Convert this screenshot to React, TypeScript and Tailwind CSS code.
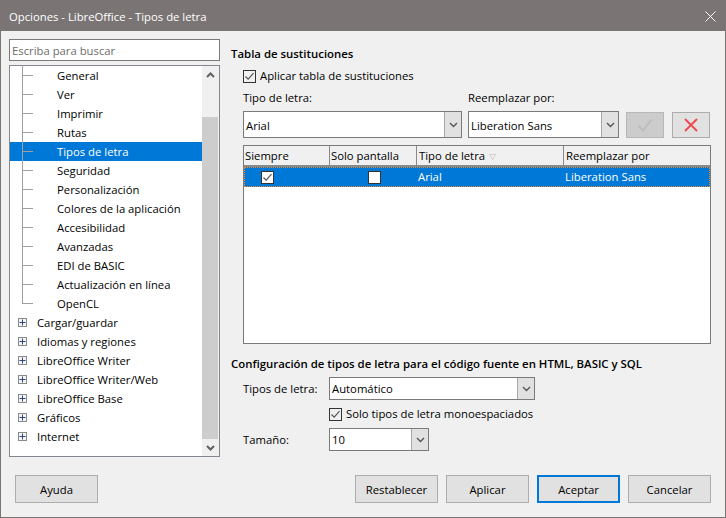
const FONT = "font-['Open_Sans','Noto_Sans',sans-serif]";

const SUB_ITEMS = ["General", "Ver", "Imprimir", "Rutas", "Tipos de letra", "Seguridad", "Personalización", "Colores de la aplicación", "Accesibilidad", "Avanzadas", "EDI de BASIC", "Actualización en línea", "OpenCL"];
const TOP_ITEMS = ["Cargar/guardar", "Idiomas y regiones", "LibreOffice Writer", "LibreOffice Writer/Web", "LibreOffice Base", "Gráficos", "Internet"];

function Chevron({ up = false, color = "#404040", weight = 1.4 }: { up?: boolean; color?: string; weight?: number }) {
  return (
    <svg width="9" height="6" viewBox="0 0 9 6" fill="none">
      <path d={up ? "M1 5 L4.5 1.5 L8 5" : "M1 1 L4.5 4.5 L8 1"} stroke={color} strokeWidth={weight} />
    </svg>
  );
}

function Checkbox({ checked = true, bg = "" }: { checked?: boolean; bg?: string }) {
  return (
    <div className={`flex h-[13px] w-[13px] shrink-0 items-center justify-center border border-[#333] ${bg}`}>
      {checked && (
        <svg width="11" height="11" viewBox="0 0 11 11" fill="none">
          <path d="M1.5 5.5 L4.2 8.2 L9.5 2.2" stroke="#555" strokeWidth="1.2" />
        </svg>
      )}
    </div>
  );
}

function Combo({ label, className, textClass = "pt-px" }: { label: string; className: string; textClass?: string }) {
  return (
    <div className={`flex items-stretch border border-[#7a7a7a] bg-white ${className}`}>
      <div className={`flex flex-1 items-center pl-[2px] text-[11.3px] text-black ${textClass}`}>{label}</div>
      <div className="flex w-[17px] items-center justify-center border-l border-[#a8a8a8] bg-[#e1e1e1]">
        <Chevron color="#555" />
      </div>
    </div>
  );
}

function Btn({ label, active = false }: { label: string; active?: boolean }) {
  return (
    <div className={`flex h-[28px] w-[83px] items-center justify-center bg-[#e1e1e1] pt-[2px] text-[11.3px] text-black ${active ? "border-2 border-[#0078d7]" : "border border-[#adadad]"}`}>
      {label}
    </div>
  );
}

function Tree() {
  return (
    <div className="mt-[4px] flex h-[392px] w-[211px] border border-[#828790] bg-white">
      <div className="w-[192px] shrink-0 text-[11.3px] text-black">
        {SUB_ITEMS.map((t, i) => {
          const last = i === SUB_ITEMS.length - 1;
          const sel = t === "Tipos de letra";
          return (
            <div key={t} className={`flex h-[19px] items-center ${sel ? "bg-[#0078d7] text-white" : ""}`}>
              <div className="w-[12px] shrink-0" />
              {last ? (
                <div className="mb-[9px] h-[10px] w-[11px] shrink-0 border-b border-l border-[#a0a0a0]" />
              ) : (
                <div className="flex h-full w-[11px] shrink-0 items-center border-l border-[#a0a0a0]">
                  <div className="h-px w-full bg-[#a0a0a0]" />
                </div>
              )}
              <span className="ml-[24px] whitespace-nowrap pt-px">{t}</span>
            </div>
          );
        })}
        {TOP_ITEMS.map((t) => (
          <div key={t} className="flex h-[19px] items-center">
            <div className="ml-[8px] flex h-[9px] w-[9px] shrink-0 items-center justify-center border border-[#8a8a8a] bg-[#f4f4f4]">
              <svg width="7" height="7" viewBox="0 0 7 7"><path d="M0.5 3.5H6.5M3.5 0.5V6.5" stroke="#2a4a80" strokeWidth="1" /></svg>
            </div>
            <span className="ml-[10px] whitespace-nowrap pt-px">{t}</span>
          </div>
        ))}
      </div>
      <div className="flex w-[17px] flex-col bg-[#f0f0f0]">
        <div className="flex h-[17px] items-center justify-center"><Chevron up color="#606060" weight={2} /></div>
        <div className="h-[34px]" />
        <div className="mr-px h-[322px] bg-[#cdcdcd]" />
        <div className="flex flex-1 items-center justify-center"><Chevron color="#606060" weight={2} /></div>
      </div>
    </div>
  );
}

function SubstTable() {
  const head = "flex items-center pl-[1px] pt-[2px] border-r border-[#8a8a8a] h-full";
  return (
    <div className="ml-[12px] mt-[7px] h-[199px] w-[468px] border border-[#7a7a7a] bg-white text-[11.3px]">
      <div className="flex h-[21px] items-center border-b-2 border-[#8a8a8a] bg-[#f0f0f0] text-black">
        <div className={`${head} w-[86px]`}>Siempre</div>
        <div className={`${head} w-[87px]`}>Solo pantalla</div>
        <div className={`${head} w-[147px] pl-[2px]`}>
          Tipo de letra
          <svg className="ml-[4px]" width="7" height="6" viewBox="0 0 7 6" fill="none"><path d="M0.5 0.5H6.5L3.5 5.5Z" stroke="#c8c8c8" strokeWidth="0.8" /></svg>
        </div>
        <div className="flex-1 pl-[2px] pt-[2px]">Reemplazar por</div>
      </div>
      <div className="flex h-[20px] items-center border border-dotted border-[#f08a24] bg-[#0078d7] text-white">
        <div className="w-[85px] pl-[16px]"><Checkbox bg="bg-white" /></div>
        <div className="flex w-[87px] justify-center pl-[2px]"><Checkbox checked={false} bg="bg-white" /></div>
        <div className="w-[147px] pl-[1px] pt-px">Arial</div>
        <div className="flex-1 pl-[1px] pt-px">Liberation Sans</div>
      </div>
    </div>
  );
}

export default function App() {
  return (
    <div className={`flex h-[518px] w-[726px] flex-col overflow-hidden border border-[#7a7574] bg-[#f0f0f0] ${FONT}`}>
      <div className="flex h-[30px] shrink-0 items-center justify-between bg-[#7a7574] pl-[8px] pr-[9px] text-[11.3px] text-white">
        <span className="pt-[2px]">Opciones - LibreOffice - Tipos de letra</span>
        <svg width="11" height="11" viewBox="0 0 11 11" fill="none"><path d="M0.5 0.5L10.5 10.5M10.5 0.5L0.5 10.5" stroke="#fff" strokeWidth="1" /></svg>
      </div>

      <div className="flex flex-1">
        <div className="ml-[8px] mt-[8px] w-[211px] shrink-0">
          <div className="flex h-[22px] items-center border border-[#7a7a7a] bg-white pl-[2px] pt-[2px] text-[11.3px] text-[#6d6d6d]">Escriba para buscar</div>
          <Tree />
          <div className="ml-[6px] mt-[18px]"><Btn label="Ayuda" /></div>
        </div>

        <div className="ml-[11px] flex-1 text-[11.3px] text-black">
          <div className="mt-[14px] h-[18px] text-[11.4px] font-semibold leading-[18px]">Tabla de sustituciones</div>
          <div className="ml-[12px] mt-[5px] flex h-[16px] items-center gap-[4px]"><Checkbox /><span>Aplicar tabla de sustituciones</span></div>
          <div className="ml-[12px] mt-[5px] flex h-[18px] items-center">
            <span className="w-[225px]">Tipo de letra:</span>
            <span>Reemplazar por:</span>
          </div>
          <div className="ml-[12px] mt-[4px] flex h-[27px] items-stretch">
            <Combo label="Arial" className="w-[219px]" textClass="pt-[3px]" />
            <Combo label="Liberation Sans" className="ml-[6px] w-[151px]" textClass="pt-[3px]" />
            <div className="ml-[7px] mt-px flex h-[26px] w-[38px] items-center justify-center border border-[#b8b8b8] bg-[#cccccc]">
              <svg width="16" height="14" viewBox="0 0 16 14" fill="none"><path d="M1.5 8L6 12.5L14.5 1.5" stroke="#bdbdbd" strokeWidth="2" /></svg>
            </div>
            <div className="ml-[8px] mt-px flex h-[26px] w-[38px] items-center justify-center border border-[#adadad] bg-[#e1e1e1]">
              <svg width="16" height="16" viewBox="0 0 16 16" fill="none"><path d="M2 2L14 14M14 2L2 14" stroke="#f0484e" strokeWidth="1.8" /></svg>
            </div>
          </div>
          <SubstTable />
          <div className="mt-[11px] h-[18px] text-[11.4px] font-semibold leading-[18px]">Configuración de tipos de letra para el código fuente en HTML, BASIC y SQL</div>
          <div className="ml-[12px] mt-[4px] flex h-[23px] items-center">
            <span className="w-[86px] pt-px">Tipos de letra:</span>
            <Combo label="Automático" className="h-full w-[206px]" />
          </div>
          <div className="ml-[98px] mt-[5px] flex h-[18px] items-center gap-[4px]"><Checkbox /><span className="pt-px">Solo tipos de letra monoespaciados</span></div>
          <div className="ml-[12px] mt-[5px] flex h-[23px] items-center">
            <span className="w-[86px] pt-px">Tamaño:</span>
            <Combo label="10" className="h-full w-[100px]" />
          </div>
          <div className="ml-[124px] mt-[24px] flex gap-[8px]">
            <Btn label="Restablecer" />
            <Btn label="Aplicar" />
            <Btn label="Aceptar" active />
            <Btn label="Cancelar" />
          </div>
        </div>
      </div>
    </div>
  );
}
